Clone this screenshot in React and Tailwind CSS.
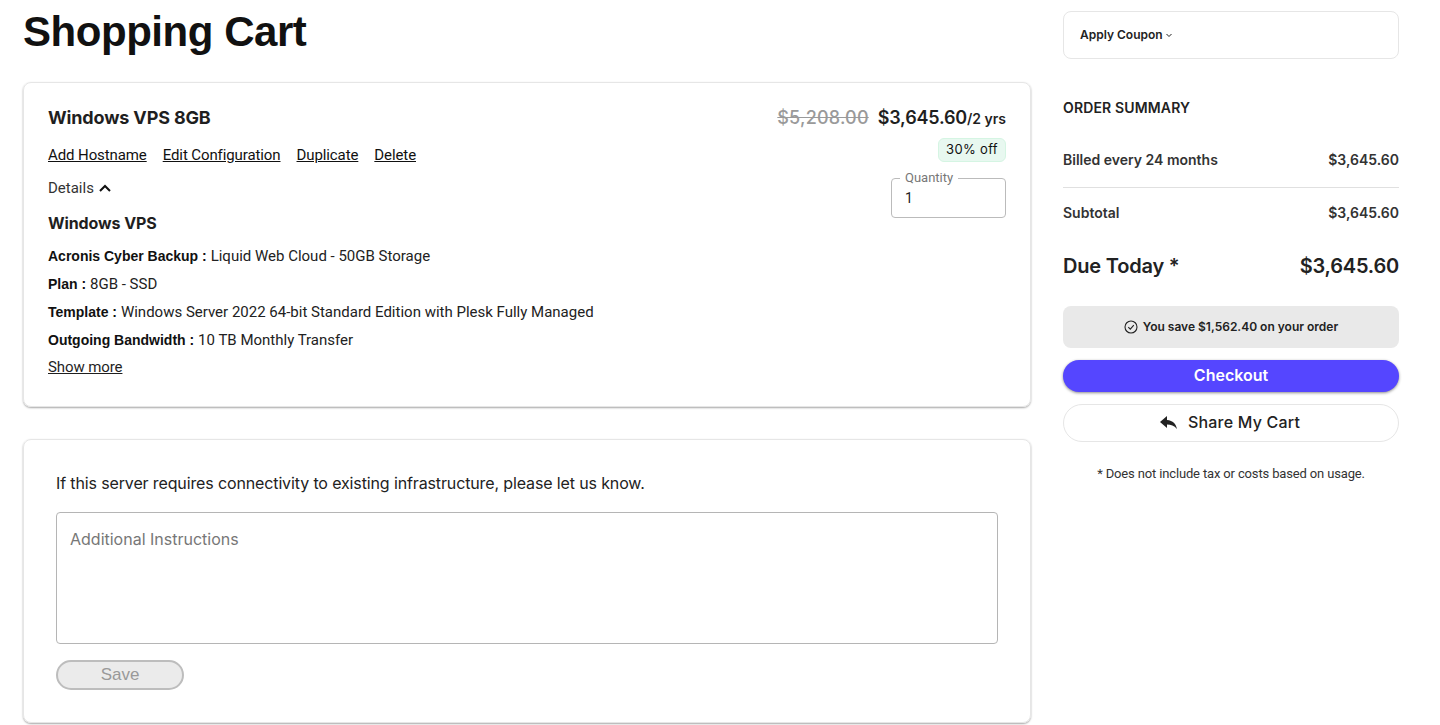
import React from "react";

const sans = "font-['Liberation_Sans',Arial,sans-serif]";
const inter = "font-['Inter',sans-serif]";
const roboto = "font-['Roboto',sans-serif]";

function Spec({ label, value }) {
  return (
    <p className={`h-7 text-[15px] leading-7 text-[#222] ${roboto}`}>
      <span className={`text-sm font-bold text-[#111] ${sans}`}>{label} : </span>
      {value}
    </p>
  );
}

export default function App() {
  return (
    <div className={`flex h-[725px] w-[1440px] gap-8 overflow-hidden bg-white pl-[23px] text-[#1f1f1f] ${sans}`}>
      <main className="w-[1008px]">
        <h1 className="mt-[8px] h-[74px] text-[42px] font-bold leading-[48px] tracking-[-0.46px] text-[#111]">Shopping Cart</h1>
        <section className="relative h-[325px] rounded-lg border border-[#e6e6e6] px-6 pt-[21px] shadow-[0_1px_2px_rgba(0,0,0,0.35)]">
          <div className="flex items-start justify-between">
            <div>
              <h2 className={`text-lg font-bold leading-7 tracking-[-0.15px] text-[#1f1f1f] ${inter}`}>Windows VPS 8GB</h2>
              <nav className={`mt-[13px] flex gap-4 text-[15px] leading-5 tracking-[-0.1px] text-[#111] underline ${roboto}`}>
                <span>Add Hostname</span>
                <span>Edit Configuration</span>
                <span>Duplicate</span>
                <span>Delete</span>
              </nav>
              <div className={`mt-[13px] flex items-center gap-1 text-[15px] leading-5 text-[#333] ${roboto}`}>
                Details
                <svg width="14" height="14" viewBox="0 0 14 14" fill="none" stroke="#111" strokeWidth="2"><path d="M2 10l5-5 5 5" /></svg>
              </div>
              <h3 className={`mt-[15px] text-base font-bold leading-5 tracking-[-0.1px] ${inter}`}>Windows VPS</h3>
            </div>
            <div className="flex flex-col items-end">
              <div className="flex items-baseline leading-7">
                <span className={`text-lg font-medium tracking-[0.2px] text-[#9a9a9a] line-through ${inter}`}>$5,208.00</span>
                <span className={`ml-[9px] text-lg font-semibold tracking-[-0.2px] ${inter}`}>$3,645.60</span>
                <span className={`text-sm font-semibold ${inter}`}>/2 yrs</span>
              </div>
              <span className={`mt-[6px] flex h-6 w-[68px] items-center justify-center rounded-md border border-[#d5f5e3] bg-[#e8f8f0] text-[13px] tracking-wide text-[#111] ${inter}`}>30% off</span>
              <div className={`relative mt-[16px] h-10 w-[115px] rounded border border-[#bbb] pl-[13px] pt-[9px] text-sm leading-5 text-[#222] ${roboto}`}>
                <span className="absolute -top-[11px] left-[8px] bg-white px-[5px] text-[13px] text-[#777]">Quantity</span>
                1
              </div>
            </div>
          </div>
          <div className="mt-[9px]">
            <Spec label="Acronis Cyber Backup" value="Liquid Web Cloud - 50GB Storage" />
            <Spec label="Plan" value="8GB - SSD" />
            <Spec label="Template" value="Windows Server 2022 64-bit Standard Edition with Plesk Fully Managed" />
            <Spec label="Outgoing Bandwidth" value="10 TB Monthly Transfer" />
            <p className={`mt-px text-[15px] leading-6 tracking-[-0.1px] underline ${roboto}`}>Show more</p>
          </div>
        </section>

        <section className="mt-8 h-[284px] rounded-lg border border-[#e6e6e6] px-8 pt-[31px] shadow-[0_1px_2px_rgba(0,0,0,0.35)]">
          <p className={`text-base leading-6 tracking-[-0.13px] text-[#222] ${inter}`}>If this server requires connectivity to existing infrastructure, please let us know.</p>
          <div className={`mt-[17px] h-[132px] rounded-sm border border-[#b5b5b5] px-[13px] pt-[16px] text-base leading-5 text-[#777] ${inter}`}>Additional Instructions</div>
          <button className="mt-4 h-[30px] w-[128px] rounded-full border-2 border-[#bdbdbd] bg-[#ebebeb] text-[17px] font-medium text-[#999]">Save</button>
        </section>
      </main>

      <aside className="w-[336px] pt-[11px]">
        <div className={`flex h-12 items-center rounded-lg border border-[#e6e6e6] px-4 text-xs font-semibold text-[#222] ${inter}`}>
          Apply Coupon
          <svg className="ml-[2px]" width="8" height="8" viewBox="0 0 8 8" fill="none" stroke="#222" strokeWidth="1"><path d="M1.500 3l2.500 2.500L6.500 3" /></svg>
        </div>
        <h2 className={`mt-[39px] text-sm font-semibold leading-5 tracking-[0.15px] text-[#222] ${inter}`}>ORDER SUMMARY</h2>
        <div className={`mt-[32px] flex justify-between text-sm font-semibold leading-5 text-[#333] ${inter}`}>
          <span>Billed every 24 months</span><span>$3,645.60</span>
        </div>
        <hr className="mt-[17px] border-[#e0e0e0]" />
        <div className={`mt-[15px] flex justify-between text-sm font-semibold leading-5 text-[#333] ${inter}`}>
          <span>Subtotal</span><span>$3,645.60</span>
        </div>
        <div className={`mt-[29px] flex justify-between text-xl font-semibold leading-7 tracking-[-0.2px] text-[#222] ${inter}`}>
          <span>Due Today *</span><span>$3,645.60</span>
        </div>
        <div className={`mt-[26px] flex h-[42px] items-center justify-center gap-[5px] rounded-lg bg-[#e9e9e9] text-xs font-semibold text-[#222] ${inter}`}>
          <svg width="14" height="14" viewBox="0 0 14 14" fill="none" stroke="#222" strokeWidth="1.1"><circle cx="7" cy="7" r="6" /><path d="M4.300 7.200l2 2 3.500-4" /></svg>
          You save $1,562.40 on your order
        </div>
        <button className={`mt-3 block h-8 w-full rounded-full bg-[#5546ff] pb-[2px] text-base font-semibold text-white shadow-[0_1px_3px_rgba(0,0,0,0.45)] ${inter}`}>Checkout</button>
        <button className={`mt-3 flex h-[38px] w-full items-center justify-center gap-[11px] rounded-full border border-[#e6e6e6] pb-[2px] pr-[2px] text-base font-medium tracking-[0.2px] text-[#222] ${inter}`}>
          <svg width="17" height="13" viewBox="0 0 17 13" fill="#222"><path d="M7 0L0 6l7 6V8.500c4 0 7 1 10 4.500-1-5-4-8.500-10-9z" /></svg>
          Share My Cart
        </button>
        <p className={`mt-[24px] text-center text-[13px] leading-4 tracking-[-0.15px] text-[#333] ${roboto}`}>* Does not include tax or costs based on usage.</p>
      </aside>
    </div>
  );
}
